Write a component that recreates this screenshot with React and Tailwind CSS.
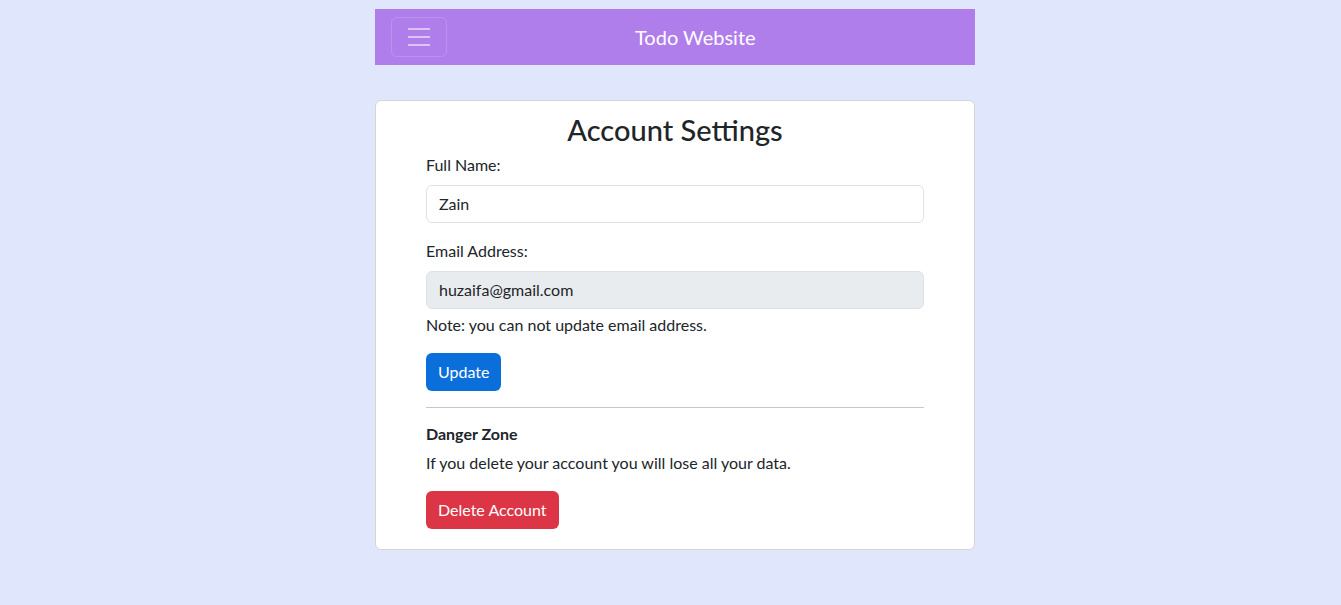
export default function App() {
  return (
    <div
      className="min-h-[605px] w-full bg-[#e0e7fd] pl-[9px] pt-[9px] text-[#212529]"
      style={{ fontFamily: 'Lato, "Noto Sans", sans-serif' }}
    >
      <div className="mx-auto w-[600px]">
        {/* Navbar */}
        <nav className="relative flex h-[56px] items-center bg-[#af7eeb] px-4">
          <button
            type="button"
            className="flex h-[40px] w-[56px] flex-col items-center justify-center gap-[6px] rounded-md border border-white/15"
          >
            <span className="block h-[2px] w-[22px] bg-white/55" />
            <span className="block h-[2px] w-[22px] bg-white/55" />
            <span className="block h-[2px] w-[22px] bg-white/55" />
          </button>
          <span className="absolute left-[260px] top-1/2 -translate-y-1/2 text-[20px] text-white">Todo Website</span>
        </nav>

        {/* Card */}
        <div className="mt-[35px] rounded-md border border-[#d3d5d9] bg-white px-[50px] pb-[20px] pt-[12px]">
          <h3 className="text-center text-[29px] font-medium leading-[1.16]">Account Settings</h3>

          <label className="mt-[6px] block leading-6">Full Name:</label>
          <input
            type="text"
            defaultValue="Zain"
            className="mt-2 block h-[38px] w-full rounded-md border border-[#dee2e6] px-3 text-[16px] outline-none"
          />

          <label className="mt-4 block leading-6">Email Address:</label>
          <input
            type="email"
            defaultValue="huzaifa@gmail.com"
            disabled
            className="mt-2 block h-[38px] w-full rounded-md border border-[#dee2e6] bg-[#e9ecef] px-3 text-[16px] text-[#212529]"
          />
          <p className="mt-1 leading-6">Note: you can not update email address.</p>

          <button
            type="button"
            className="mt-4 h-[38px] rounded-md bg-[#0b6fdb] px-3 text-white"
          >
            Update
          </button>

          <hr className="mt-4 border-t border-[#c8c8c8]" />

          <h6 className="mt-[16px] text-[16px] font-bold leading-[1.2]">Danger Zone</h6>
          <p className="mt-2 leading-6">If you delete your account you will lose all your data.</p>

          <button
            type="button"
            className="mt-4 h-[38px] rounded-md bg-[#dc3545] px-3 text-white"
          >
            Delete Account
          </button>
        </div>
      </div>
    </div>
  );
}
